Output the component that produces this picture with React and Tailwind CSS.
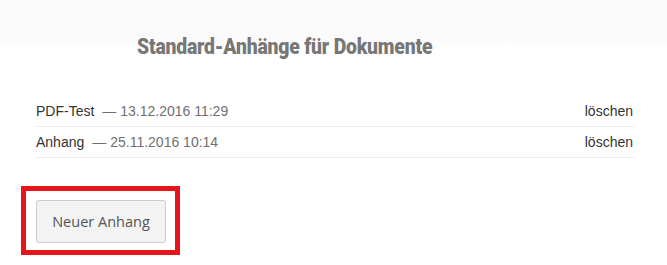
import React from 'react'

const attachments = [
    { name: 'PDF-Test', date: '13.12.2016 11:29' },
    { name: 'Anhang', date: '25.11.2016 10:14' },
]

function App() {
    return (
        <div className="w-[667px] h-[265px] bg-white bg-[linear-gradient(to_bottom,#fafafa_35px,#ffffff_50px)] font-['Liberation_Sans',Arial,sans-serif] overflow-hidden">
            <div className="pl-[137px] pt-[33px] h-[61px]">
                <h1 className="inline-block origin-left scale-x-[0.88] whitespace-nowrap text-[22px] leading-[28px] font-black text-[#777777] tracking-[-0.2px] font-['Roboto',sans-serif]">
                    Standard-Anhänge für Dokumente
                </h1>
            </div>
            <ul className="mt-[35px] ml-[36px] w-[598px]">
                {attachments.map(item => (
                    <li key={item.name} className="flex justify-between items-center py-[5px] border-b border-[#ececec] text-[14px] leading-[20px]">
                        <span className="text-[#333333]">
                            {item.name}
                            <span className="ml-[8px] text-[#707070]">— {item.date}</span>
                        </span>
                        <a href="#" className="text-[#333333] pr-px">löschen</a>
                    </li>
                ))}
            </ul>
            <div className="ml-[21px] mt-[28px] inline-block border-[5px] border-[#e8141c] pl-[10px] pr-[9px] pt-[9px] pb-[7px]">
                <button className="w-[130px] h-[43px] rounded-[3px] border border-[#cccccc] bg-[#f3f3f3] text-[14.5px] text-[#555555] font-['Open_Sans',sans-serif]">
                    Neuer Anhang
                </button>
            </div>
        </div>
    )
}

export default App
